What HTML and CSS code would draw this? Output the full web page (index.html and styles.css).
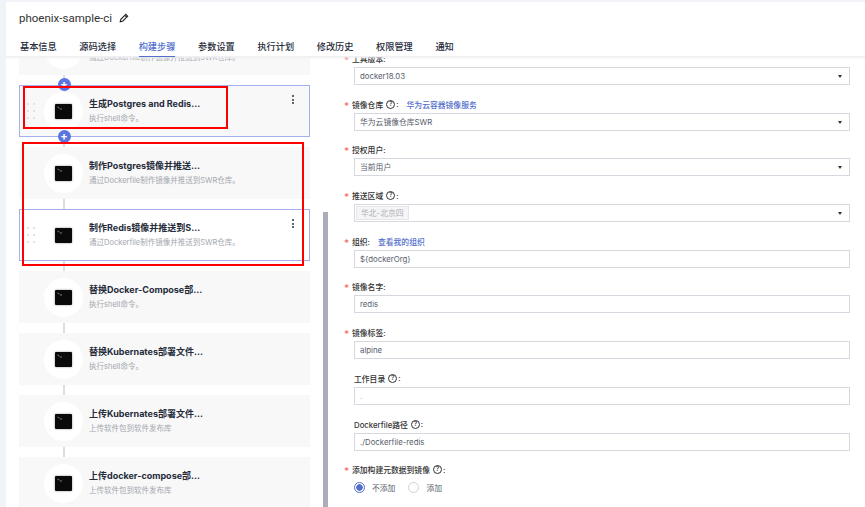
FILE: index.html
```html
<!DOCTYPE html>
<html lang="en">
  <head>
    <meta charset="UTF-8" />
    <title>phoenix-sample-ci</title>
    <link rel="stylesheet" href="styles.css">
  </head>
  <body>
    <section class="page">
      <header class="top">
        <div class="titleRow">
          <h1>phoenix-sample-ci</h1>
          <svg class="pen" viewBox="0 0 12 12" width="10" height="10">
            <path d="M1.5 10.5 L2.2 7.6 L8.2 1.6 L10.4 3.8 L4.4 9.8 Z M7 2.8 L9.2 5" fill="none" stroke="#222" stroke-width="1.3" />
          </svg>
        </div>
        <nav class="tabs">
          <a>基本信息</a>
          <a>源码选择</a>
          <a class="active">构建步骤</a>
          <a>参数设置</a>
          <a>执行计划</a>
          <a>修改历史</a>
          <a>权限管理</a>
          <a>通知</a>
        </nav>
      </header>
      <div class="main">
        <div class="leftDiv">
          <div class="steps">
            <div class="step cut">
              <div class="circle"></div>
              <div class="stepText">
                <p>通过Dockerfile制作镜像并推送到SWR仓库。</p>
              </div>
            </div>
            <div class="link"><span class="plus plusLow">+</span></div>
            <div class="step picked">
              <div class="dots"><i></i><i></i><i></i><i></i><i></i><i></i></div>
              <div class="circle">
                <svg class="term" viewBox="0 0 17 15"><rect width="17" height="15" rx="1" fill="#0a0a0a" /><path d="M2.5 3 L4.5 4.2 M5 5 H7" stroke="#9a9a9a" stroke-width="0.8" fill="none" /></svg>
              </div>
              <div class="stepText">
                <h3>生成Postgres and Redis...</h3>
                <p>执行shell命令。</p>
              </div>
              <div class="more"><i></i><i></i><i></i></div>
            </div>
            <div class="link"><span class="plus plusHigh">+</span></div>
            <div class="step">
              <div class="circle">
                <svg class="term" viewBox="0 0 17 15"><rect width="17" height="15" rx="1" fill="#0a0a0a" /><path d="M2.5 3 L4.5 4.2 M5 5 H7" stroke="#9a9a9a" stroke-width="0.8" fill="none" /></svg>
              </div>
              <div class="stepText">
                <h3>制作Postgres镜像并推送...</h3>
                <p>通过Dockerfile制作镜像并推送到SWR仓库。</p>
              </div>
            </div>
            <div class="link"></div>
            <div class="step picked plain">
              <div class="dots"><i></i><i></i><i></i><i></i><i></i><i></i></div>
              <div class="circle">
                <svg class="term" viewBox="0 0 17 15"><rect width="17" height="15" rx="1" fill="#0a0a0a" /><path d="M2.5 3 L4.5 4.2 M5 5 H7" stroke="#9a9a9a" stroke-width="0.8" fill="none" /></svg>
              </div>
              <div class="stepText">
                <h3>制作Redis镜像并推送到S...</h3>
                <p>通过Dockerfile制作镜像并推送到SWR仓库。</p>
              </div>
              <div class="more"><i></i><i></i><i></i></div>
            </div>
            <div class="link"></div>
            <div class="step">
              <div class="circle">
                <svg class="term" viewBox="0 0 17 15"><rect width="17" height="15" rx="1" fill="#0a0a0a" /><path d="M2.5 3 L4.5 4.2 M5 5 H7" stroke="#9a9a9a" stroke-width="0.8" fill="none" /></svg>
              </div>
              <div class="stepText">
                <h3>替换Docker-Compose部...</h3>
                <p>执行shell命令。</p>
              </div>
            </div>
            <div class="link"></div>
            <div class="step">
              <div class="circle">
                <svg class="term" viewBox="0 0 17 15"><rect width="17" height="15" rx="1" fill="#0a0a0a" /><path d="M2.5 3 L4.5 4.2 M5 5 H7" stroke="#9a9a9a" stroke-width="0.8" fill="none" /></svg>
              </div>
              <div class="stepText">
                <h3>替换Kubernates部署文件...</h3>
                <p>执行shell命令。</p>
              </div>
            </div>
            <div class="link"></div>
            <div class="step">
              <div class="circle">
                <svg class="term" viewBox="0 0 17 15"><rect width="17" height="15" rx="1" fill="#0a0a0a" /><path d="M2.5 3 L4.5 4.2 M5 5 H7" stroke="#9a9a9a" stroke-width="0.8" fill="none" /></svg>
              </div>
              <div class="stepText">
                <h3>上传Kubernates部署文件...</h3>
                <p>上传软件包到软件发布库</p>
              </div>
            </div>
            <div class="link"></div>
            <div class="step">
              <div class="circle">
                <svg class="term" viewBox="0 0 17 15"><rect width="17" height="15" rx="1" fill="#0a0a0a" /><path d="M2.5 3 L4.5 4.2 M5 5 H7" stroke="#9a9a9a" stroke-width="0.8" fill="none" /></svg>
              </div>
              <div class="stepText">
                <h3>上传docker-compose部...</h3>
                <p>上传软件包到软件发布库</p>
              </div>
            </div>
          </div>
          <div class="scrollTrack"><div class="scrollThumb"></div></div>
        </div>
        <form class="rightDiv">
          <div class="field firstField">
            <label class="need">工具版本:</label>
            <div class="box select">docker18.03</div>
          </div>
          <div class="field">
            <label class="need">镜像仓库<span class="help">?</span>:<a>华为云容器镜像服务</a></label>
            <div class="box select">华为云镜像仓库SWR</div>
          </div>
          <div class="field">
            <label class="need">授权用户:</label>
            <div class="box select">当前用户</div>
          </div>
          <div class="field">
            <label class="need">推送区域<span class="help">?</span>:</label>
            <div class="box select"><span class="tag">华北-北京四</span></div>
          </div>
          <div class="field">
            <label class="need">组织:<a>查看我的组织</a></label>
            <div class="box">${dockerOrg}</div>
          </div>
          <div class="field">
            <label class="need">镜像名字:</label>
            <div class="box">redis</div>
          </div>
          <div class="field">
            <label class="need">镜像标签:</label>
            <div class="box">alpine</div>
          </div>
          <div class="field">
            <label>工作目录<span class="help">?</span>:</label>
            <div class="box faint">.</div>
          </div>
          <div class="field">
            <label>Dockerfile路径<span class="help">?</span>:</label>
            <div class="box">./Dockerfile-redis</div>
          </div>
          <div class="field">
            <label class="need">添加构建元数据到镜像<span class="help">?</span>:</label>
            <div class="radios">
              <span class="radio on"></span><span class="radioText">不添加</span>
              <span class="radio"></span><span class="radioText">添加</span>
            </div>
          </div>
        </form>
      </div>
    </section>
    <!-- red boxes drawn on top of the screenshot -->
    <div class="mark markOne"></div>
    <div class="mark markTwo"></div>
  </body>
</html>
```

FILE: styles.css
```css
* {
  margin: 0px;
  padding: 0px;
  box-sizing: border-box;
}
html,
body {
  height: 100%;
  overflow: hidden;
}
body {
  background-color: #f0f3f7;
  padding: 2px 0 0 6px;
  font-family: "Inter", "Noto Sans CJK SC", sans-serif;
  color: #333;
}
.page {
  height: 505px;
  background-color: #fff;
  display: flex;
  flex-direction: column;
}
.top {
  height: 55px;
  flex: none;
  border-bottom: 1px solid #eef0f3;
  box-shadow: 0 1px 2px #f0f0f0;
  position: relative;
  z-index: 2;
  background-color: #fff;
  padding: 7px 0 0 13px;
}
.titleRow {
  display: flex;
  align-items: center;
  gap: 7px;
  height: 17px;
}
h1 {
  font-family: "Roboto", sans-serif;
  font-size: 11.5px;
  font-weight: 400;
  color: #333;
}
.tabs {
  display: flex;
  gap: 22.6px;
  margin-top: 13px;
  padding-left: 1px;
}
.tabs a {
  font-size: 9.2px;
  font-weight: 500;
  color: #252b3a;
  height: 18px;
  line-height: 16px;
}
.tabs .active {
  color: #526ecc;
  border-bottom: 1px solid #526ecc;
}
.main {
  flex: 1;
  display: flex;
  min-height: 0;
}
.leftDiv {
  width: 322px;
  flex: none;
  display: flex;
  overflow: hidden;
}
.steps {
  width: 317px;
  flex: none;
  padding: 0 13px;
}
.step {
  height: 52px;
  background-color: #f8f8f8;
  display: flex;
  align-items: center;
  padding-left: 25px;
  position: relative;
}
.cut {
  height: 18px;
  align-items: flex-end;
  overflow: hidden;
}
.cut .circle {
  margin-bottom: 6px;
}
.cut .stepText {
  margin-bottom: 11px;
}
.picked {
  border: 1px solid #a3b0ec;
  padding-left: 24px;
}
.plain {
  background-color: #fff;
}
.circle {
  width: 39px;
  height: 39px;
  border-radius: 50%;
  background-color: #fff;
  display: flex;
  align-items: center;
  justify-content: center;
  flex: none;
}
.term {
  width: 17px;
  height: 15px;
  filter: drop-shadow(0 0 1px #999);
}
.stepText {
  margin-left: 6px;
}
.step h3 {
  font-size: 9px;
  font-weight: 700;
  color: #252b3a;
  line-height: 13px;
  white-space: nowrap;
}
.step p {
  font-size: 7.5px;
  color: #a4a7af;
  line-height: 12px;
  margin-top: 3px;
  white-space: nowrap;
}
.link {
  width: 2px;
  height: 10px;
  background-color: #dcdee3;
  margin-left: 44px;
  position: relative;
}
.plus {
  position: absolute;
  left: -5.5px;
  width: 13px;
  height: 13px;
  border-radius: 50%;
  background-color: #5a75dd;
  color: #fff;
  font-size: 11px;
  font-weight: 700;
  line-height: 13px;
  text-align: center;
  z-index: 1;
}
.plusLow {
  top: 3px;
}
.plusHigh {
  top: -7px;
}
.dots {
  position: absolute;
  left: 7px;
  top: 17px;
  display: grid;
  grid-template-columns: 2px 2px;
  grid-auto-rows: 2px;
  gap: 5px 4px;
}
.dots i {
  background-color: #e2e2e2;
}
.more {
  position: absolute;
  right: 15px;
  top: 9px;
  display: flex;
  flex-direction: column;
  gap: 1.5px;
}
.more i {
  width: 2px;
  height: 2px;
  border-radius: 50%;
  background-color: #333;
}
.scrollTrack {
  width: 5px;
  flex: none;
  padding-top: 155px;
}
.scrollThumb {
  height: 300px;
  background-color: #abaeb8;
}
.rightDiv {
  flex: 1;
  padding: 0 15px 0 26px;
  overflow: hidden;
}
.field {
  height: 45.7px;
}
.firstField {
  margin-top: -7px;
}
label {
  display: flex;
  align-items: center;
  height: 17px;
  font-size: 7.8px;
  font-weight: 500;
  color: #333;
  position: relative;
  white-space: nowrap;
}
label.need {
  margin-left: -2px;
}
label.need::before {
  content: "*";
  position: absolute;
  left: -8px;
  top: 4px;
  color: #f66f6a;
  font-size: 10px;
}
label a {
  color: #526ecc;
  margin-left: 8px;
}
.help {
  width: 9px;
  height: 9px;
  border: 1px solid #333;
  border-radius: 50%;
  font-size: 6.5px;
  line-height: 7px;
  text-align: center;
  margin: 0 1px 0 3px;
}
.box {
  height: 18px;
  border: 1px solid #d6d8e0;
  font-size: 7.8px;
  line-height: 16px;
  color: #575d6c;
  padding-left: 5px;
  position: relative;
  white-space: nowrap;
}
.faint {
  color: #adb0b8;
}
.select::after {
  content: "";
  position: absolute;
  right: 7px;
  top: 7px;
  border-left: 2.5px solid transparent;
  border-right: 2.5px solid transparent;
  border-top: 3px solid #333;
}
.tag {
  display: inline-block;
  height: 14px;
  line-height: 12px;
  padding: 0 4px;
  margin-left: -4px;
  vertical-align: top;
  margin-top: 1px;
  border: 1px solid #e4e5e8;
  background-color: #f5f5f6;
  color: #adb0b8;
}
.radios {
  display: flex;
  align-items: center;
  height: 18px;
}
.radio {
  width: 11px;
  height: 11px;
  border: 1px solid #cfd1d8;
  border-radius: 50%;
  flex: none;
}
.radio.on {
  border-color: #526ecc;
  background: radial-gradient(circle, #526ecc 3px, #fff 3.5px);
}
.radioText {
  font-size: 7.8px;
  color: #575d6c;
  margin: 0 13px 0 7px;
}
.mark {
  position: absolute;
  border: 2px solid #f00;
  pointer-events: none;
  z-index: 5;
}
.markOne {
  left: 23px;
  top: 86px;
  width: 205px;
  height: 43px;
}
.markTwo {
  left: 22px;
  top: 142px;
  width: 282px;
  height: 124px;
}
```
